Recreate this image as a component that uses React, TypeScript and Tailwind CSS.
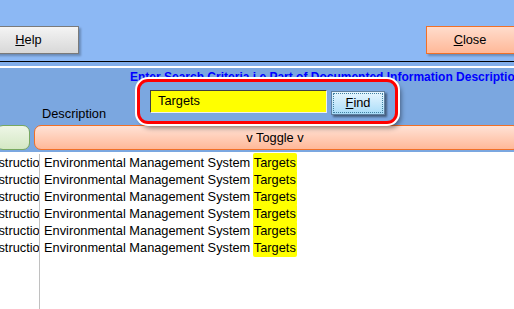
import React from "react";

const rows = Array.from({ length: 6 });

export default function App() {
  return (
    <div className="relative w-[514px] h-[309px] overflow-hidden bg-white font-['Liberation_Sans',Arial,sans-serif] text-[12.8px] text-black">
      {/* top toolbar */}
      <div className="h-[61px] bg-[#8cb8f4] flex items-start justify-between pt-[26px]">
        <button className="-ml-[22px] w-[101px] h-[28px] border border-[#7a7a7a] bg-gradient-to-b from-[#f4f4f4] to-[#d8d8d8] shadow-[2px_2px_2px_rgba(0,0,0,0.25)] flex items-center justify-center text-[12.8px]">
          <span><span className="underline">H</span>elp</span>
        </button>
        <button className="w-[92px] h-[28px] -mr-[4px] border border-[#f07028] bg-gradient-to-b from-[#ffdccc] to-[#ffb898] shadow-[2px_2px_2px_rgba(0,0,0,0.25)] flex items-center justify-center pr-[4px] text-[12.8px]">
          <span><span className="underline">C</span>lose</span>
        </button>
      </div>
      <div className="h-[1px] bg-black" />
      <div className="h-[4px] bg-[#82aeea]" />
      <div className="h-[2px] bg-white" />
      {/* search header */}
      <div className="h-[82px] bg-[#7ba7e0] flex flex-col">
        <div className="h-[18px] pt-[3px] pl-[130px] whitespace-nowrap font-bold text-[#0000ff] text-[12px] leading-[13px]">
          Enter Search Criteria i.e Part of Documented Information Description
        </div>
        <div className="h-[19px] mt-[19px] pl-[42px] leading-[19px]">Description</div>
        <div className="flex gap-[4px] mt-[2px] h-[26px] items-stretch">
          <div className="w-[34px] -ml-[4px] pl-[4px] rounded-[7px] border border-[#78a860] bg-gradient-to-b from-[#eef6e6] to-[#d4e8c4]" />
          <div className="flex-1 -mr-[6px] rounded-[7px] border border-[#f07028] bg-gradient-to-b from-[#ffe2d6] to-[#ffb898] flex items-center justify-center pr-[4px]">
            v Toggle v
          </div>
        </div>
      </div>
      {/* grid */}
      <div className="h-[2px] bg-[#7ba7e0]" />
      <div className="flex h-[158px] pt-[2px]">
        <div className="w-[40px] border-r border-[#c0c0c0] overflow-hidden">
          {rows.map((_, i) => (
            <div key={i} className="h-[17px] leading-[17px] whitespace-nowrap -ml-[25px]">Construction</div>
          ))}
        </div>
        <div className="flex-1 pl-[4px]">
          {rows.map((_, i) => (
            <div key={i} className="h-[17px] leading-[17px] whitespace-nowrap">
              Environmental Management System{" "}
              <span className="bg-[#ffff00] rounded-[2px] px-[1px] -mx-[1px] py-[2px]">Targets</span>
            </div>
          ))}
        </div>
      </div>
      {/* popup */}
      <div className="absolute left-[137px] top-[79px] w-[261px] h-[45px] rounded-[11px] border-[3px] border-[#ff0000] bg-[#7ba7e0] ring-2 ring-white shadow-[3px_4px_5px_rgba(0,0,0,0.45)] flex items-center">
        <div className="ml-[10px] w-[177px] h-[23px] mt-[-1px] bg-[#ffff00] border border-[#404040] border-r-[#f0f0f0] border-b-[#f0f0f0] flex items-center pl-[7px]">
          Targets
        </div>
        <button className="ml-[4px] w-[54px] h-[24px] mt-[2px] border border-[#6080a0] bg-gradient-to-b from-[#e8f6ff] to-[#a8dcf8] shadow-[2px_2px_2px_rgba(0,0,0,0.45)] flex items-center justify-center">
          <span className="border border-dotted border-[#4080a0] w-[50px] h-[20px] flex items-center justify-center">
            <span><span className="underline">F</span>ind</span>
          </span>
        </button>
      </div>
    </div>
  );
}
